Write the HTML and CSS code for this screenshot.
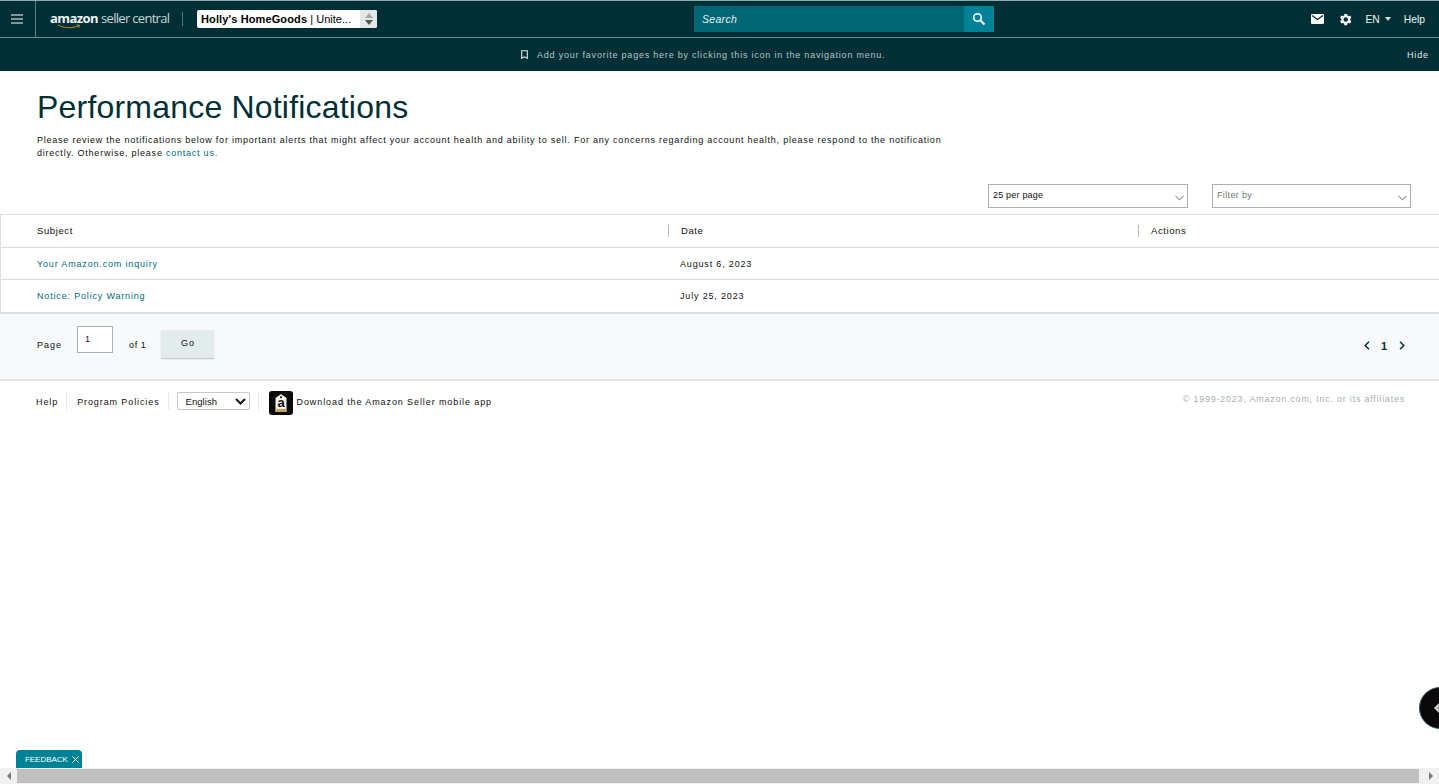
FILE: index.html
```html
<!DOCTYPE html>
<html lang="en">
<head>
<meta charset="utf-8">
<title>Performance Notifications</title>
<link rel="stylesheet" href="styles.css">
</head>
<body>
<div class="viewport">
  <div class="page">
    <header class="topbar">
      <div class="menu-cell">
        <svg class="ic-menu" width="12" height="10" viewBox="0 0 12 10"><path d="M0 1h12M0 5h12M0 9h12" stroke="#fff" stroke-width="1.2"/></svg>
      </div>
      <div class="logo">
        <span class="logo-amazon">amazon<svg class="smile" width="32" height="6" viewBox="0 0 32 6"><path d="M1 1c8 4.500 19 4.500 27 1M25 1l4 .5-1.500 3" fill="none" stroke="#c98f2c" stroke-width="1.200"/></svg></span>
        <span class="logo-rest">seller central</span>
      </div>
      <span class="logo-sep"></span>
      <div class="account">
        <span class="account-text"><b>Holly's HomeGoods</b> | Unite...</span>
        <span class="spinner"><i class="up"></i><i class="down"></i></span>
      </div>
      <div class="search">
        <span class="search-input">Search</span>
        <span class="search-btn"><svg width="14" height="14" viewBox="0 0 14 14"><circle cx="5.500" cy="5.500" r="3.800" fill="none" stroke="#fff" stroke-width="1.600"/><path d="M8.500 8.500l4 4" stroke="#fff" stroke-width="2"/></svg></span>
      </div>
      <div class="top-right">
        <svg class="ic-mail" width="13" height="10" viewBox="0 0 13 10"><rect width="13" height="10" rx="1" fill="#fff"/><path d="M1 1.500l5.500 4 5.500-4" fill="none" stroke="#002f36" stroke-width="1.300"/></svg>
        <svg class="ic-gear" width="15" height="15" viewBox="0 0 24 24"><path fill="#fff" d="M19.400 13a7.600 7.600 0 0 0 0-2l2.200-1.700-2.200-3.700-2.500 1a7.600 7.600 0 0 0-1.800-1L14.500 3h-4.300l-.4 2.600a7.600 7.600 0 0 0-1.800 1l-2.500-1-2.200 3.700L5.500 11a7.600 7.600 0 0 0 0 2l-2.200 1.700 2.200 3.700 2.500-1a7.600 7.600 0 0 0 1.800 1l.4 2.600h4.300l.4-2.600a7.600 7.600 0 0 0 1.800-1l2.500 1 2.200-3.700zM12.400 15.500a3.500 3.500 0 1 1 0-7 3.500 3.500 0 0 1 0 7z"/></svg>
        <span class="lang">EN<i class="caret"></i></span>
        <span class="help">Help</span>
      </div>
    </header>
    <div class="favbar">
      <div class="fav-msg">
        <svg width="7" height="9" viewBox="0 0 7 9"><path d="M.7.700h5.600v7.600L3.500 6.800.7 8.300z" fill="none" stroke="#dfe8e8" stroke-width="1.100"/></svg>
        <span>Add your favorite pages here by clicking this icon in the navigation menu.</span>
      </div>
      <span class="hide">Hide</span>
    </div>

    <main class="content">
      <h1 class="title">Performance Notifications</h1>
      <p class="intro">Please review the notifications below for important alerts that might affect your account health and ability to sell. For any concerns regarding account health, please respond to the notification directly. Otherwise, please <a class="link" href="#">contact us</a>.</p>
      <div class="filters">
        <div class="select"><span>25 per page</span><svg width="9" height="6" viewBox="0 0 9 6"><path d="M.5.800l4 4 4-4" fill="none" stroke="#8c9696" stroke-width="1.100"/></svg></div>
        <div class="select muted"><span>Filter by</span><svg width="9" height="6" viewBox="0 0 9 6"><path d="M.5.800l4 4 4-4" fill="none" stroke="#8c9696" stroke-width="1.100"/></svg></div>
      </div>
    </main>

    <div class="table">
      <div class="row head">
        <div class="c c1">Subject</div>
        <div class="c c2"><span class="th">Date</span></div>
        <div class="c c3"><span class="th">Actions</span></div>
      </div>
      <div class="row">
        <div class="c c1"><a class="link" href="#">Your Amazon.com inquiry</a></div>
        <div class="c c2">August 6, 2023</div>
        <div class="c c3"></div>
      </div>
      <div class="row last">
        <div class="c c1"><a class="link" href="#">Notice: Policy Warning</a></div>
        <div class="c c2">July 25, 2023</div>
        <div class="c c3"></div>
      </div>
    </div>

    <div class="pager">
      <span class="pg-label">Page</span>
      <span class="pg-input">1</span>
      <span class="pg-of">of 1</span>
      <span class="pg-go">Go</span>
      <div class="pg-nav">
        <svg width="6" height="9" viewBox="0 0 6 9"><path d="M5 .700L1.200 4.500 5 8.300" fill="none" stroke="#002f36" stroke-width="1.500"/></svg>
        <b>1</b>
        <svg width="6" height="9" viewBox="0 0 6 9"><path d="M1 .700l3.800 3.800L1 8.300" fill="none" stroke="#002f36" stroke-width="1.500"/></svg>
      </div>
    </div>

    <footer class="footer">
      <a class="f-link">Help</a>
      <span class="f-sep"></span>
      <a class="f-link">Program Policies</a>
      <span class="f-sep"></span>
      <div class="f-lang"><span>English</span><svg width="11" height="7" viewBox="0 0 11 7"><path d="M1 1l4.500 4.500L10 1" fill="none" stroke="#111" stroke-width="2"/></svg></div>
      <span class="f-sep"></span>
      <span class="app-icon">
        <svg width="24" height="24" viewBox="0 0 24 24"><rect width="24" height="24" rx="3" fill="#0b0b0b"/><path d="M6.500 7l5.500-4 5.500 4v14h-11z" fill="#f4f2ea"/><path d="M6.500 18h11v3h-11z" fill="#c9a35a"/><circle cx="12" cy="6.300" r="1" fill="#0b0b0b"/><text x="12" y="16" class="app-a">a</text></svg>
      </span>
      <span class="f-app">Download the Amazon Seller mobile app</span>
      <span class="copyright">© 1999-2023, Amazon.com, Inc. or its affiliates</span>
    </footer>
  </div>

  <div class="hscroll">
    <span class="arrow left"></span>
    <span class="thumb"></span>
    <span class="arrow right"></span>
  </div>

  <div class="feedback">FEEDBACK<svg width="7" height="7" viewBox="0 0 7 7"><path d="M.5.500l6 6M6.500.500l-6 6" stroke="#fff" stroke-width="1"/></svg></div>
  <div class="float-btn"><svg width="12" height="18" viewBox="0 0 12 18"><path d="M10 2L3 9l7 7" fill="none" stroke="#c9c9c9" stroke-width="3"/></svg></div>
</div>
</body>
</html>
```

FILE: styles.css
```css
* { box-sizing: border-box; }
html, body { margin: 0; padding: 0; height: 100%; overflow: hidden; background: #fff; }
body { font-family: "Liberation Sans", Arial, sans-serif; font-size: 10px; color: #002f36; }
.viewport { position: relative; width: 1439px; height: 784px; display: flex; flex-direction: column; overflow: hidden; }
.page { flex: 1; min-height: 0; }
a { text-decoration: none; }
.link { color: #00697a; }

.topbar { height: 38px; background: #002f36; border-top: 1px solid #8fa9b0; border-bottom: 1px solid #6f8a8e; display: flex; align-items: center; color: #fff; position: relative; }
.menu-cell { width: 36px; height: 36px; border-right: 1px solid #5f7f83; padding-right: 1px; display: flex; align-items: center; justify-content: center; }
.logo { margin-left: 14px; width: 119px; display: flex; align-items: baseline; gap: 3px; white-space: nowrap; margin-top: -2px; }
.logo-amazon { font-family: "Open Sans", sans-serif; font-weight: 700; font-size: 13px; letter-spacing: -.55px; position: relative; color: #f2f5f5; }
.smile { position: absolute; left: 7px; top: 15px; width: 25px; height: 5px; }
.logo-rest { font-family: "Open Sans", sans-serif; font-size: 13px; color: #c9d4d5; letter-spacing: -.7px; }
.logo-sep { width: 1px; height: 14px; background: #55757a; margin-left: 13px; }
.account { margin-left: 14px; width: 180px; height: 18px; background: #fff; border-radius: 2px; color: #000; display: flex; align-items: center; padding-left: 4px; font-size: 11px; white-space: nowrap; justify-content: space-between; }
.account b { letter-spacing: .12px; }
.account-text { letter-spacing: .03px; }
.spinner { width: 17px; height: 18px; background: #e6e8e8; border-radius: 0 2px 2px 0; display: flex; flex-direction: column; align-items: center; justify-content: center; gap: 2px; }
.spinner i { width: 0; height: 0; border-left: 4px solid transparent; border-right: 4px solid transparent; }
.spinner .up { border-bottom: 5px solid #a5a9a9; }
.spinner .down { border-top: 5px solid #555; }
.search { margin-left: 317px; width: 300px; height: 26px; display: flex; }
.search-input { flex: 1; background: #006574; color: #e6f2f3; font-style: italic; font-size: 10.500px; letter-spacing: .3px; padding-left: 8px; line-height: 26px; }
.search-btn { width: 30px; background: #008296; display: flex; align-items: center; justify-content: center; }
.top-right { margin-left: auto; display: flex; align-items: center; font-size: 10.300px; color: #f2f5f5; padding-right: 14px; }
.ic-gear { margin-left: 14px; }
.lang { margin-left: 13px; display: flex; align-items: center; }
.caret { width: 0; height: 0; border-left: 3.500px solid transparent; border-right: 3.500px solid transparent; border-top: 4px solid #d5dcdd; margin-left: 5px; }
.help { margin-left: 13px; }

.favbar { height: 33px; background: #002f36; display: flex; align-items: center; position: relative; color: #b7c4c6; font-size: 9px; letter-spacing: .78px; }
.fav-msg { margin-left: 521px; display: flex; align-items: center; gap: 9px; }
.hide { margin-left: auto; margin-right: 10px; color: #e6ecec; letter-spacing: .9px; }

.content { padding: 0 0 0 37px; }
.title { margin: 17px 0 0; font-size: 32px; line-height: 38px; font-weight: 400; color: #002f36; letter-spacing: .2px; }
.intro { margin: 8px 0 0; width: 915px; font-size: 9px; line-height: 13px; color: #0f1111; letter-spacing: .77px; }
.filters { display: flex; justify-content: flex-end; gap: 24px; margin-top: 24px; padding-right: 28px; }
.select { width: 200px; height: 24px; border: 1px solid #aab0b0; display: flex; justify-content: space-between; padding: 5px 3px 0 4px; font-size: 9px; letter-spacing: .2px; color: #0f1111; }
.select svg { margin-top: 5px; }
.select.muted { width: 199px; color: #6f7878; letter-spacing: .35px; }

.table { margin-top: 6px; border: 1px solid #dcdfdf; border-right: 0; border-bottom: 2px solid #dcdfdf; }
.row { height: 32px; display: flex; align-items: center; border-bottom: 1px solid #d9dcdc; font-size: 9px; letter-spacing: .83px; color: #0f1111; }
.row.head { height: 33px; font-size: 9.500px; letter-spacing: .6px; padding-bottom: 1px; }
.row.last { border-bottom: 0; height: 32px; }
.c { height: 100%; display: flex; align-items: center; }
.c1 { width: 667px; padding-left: 36px; }
.c2 { width: 470px; padding-left: 12px; }
.c3 { flex: 1; padding-left: 12px; }
.head .c2, .head .c3 { padding-left: 0; }
.th { border-left: 1px solid #b5baba; height: 12px; line-height: 12px; padding-left: 12px; }

.pager { height: 67px; background: #f7f9fa; border-bottom: 2px solid #e0e3e3; display: flex; align-items: flex-start; padding-left: 37px; font-size: 9px; letter-spacing: 1px; color: #0f1111; }
.pg-label { margin-top: 26px; }
.pg-input { margin-left: 15px; margin-top: 12px; width: 36px; height: 27px; border: 1px solid #aab0b0; background: #fff; padding: 7px 0 0 7px; }
.pg-of { margin-left: 16px; margin-top: 26px; letter-spacing: .6px; }
.pg-go { margin-left: 15px; margin-top: 16px; width: 53px; height: 28px; background: #e3ecec; box-shadow: 0 1px 1px #c4cbcb; text-align: center; line-height: 26px; }
.pg-nav { margin-left: auto; margin-right: 34px; margin-top: 26px; display: flex; align-items: center; gap: 11px; font-size: 11px; color: #002f36; height: 11px; }

.footer { height: 44px; display: flex; align-items: flex-start; padding-left: 36px; font-size: 9px; letter-spacing: .9px; color: #0f1111; position: relative; }
.f-link { margin-top: 16px; color: #0f1111; }
.f-sep { width: 1px; height: 18px; background: #e8eaea; margin: 11px 10px 0 8px; }
.f-lang { width: 73px; height: 18px; margin: 11px 0 0 -2px; border: 1px solid #c4c8c8; border-radius: 2px; background: #fff; display: flex; align-items: center; justify-content: space-between; padding: 0 3px 0 8px; letter-spacing: .05px; font-size: 9.500px; }
.app-icon { margin-top: 10px; height: 24px; }
.app-a { font-family: "Liberation Sans", Arial, sans-serif; font-size: 13px; font-weight: 700; text-anchor: middle; fill: #0b0b0b; letter-spacing: 0; }
.f-app { margin-top: 16px; margin-left: 4px; }
.copyright { position: absolute; right: 34px; top: 13px; color: #a9aeae; letter-spacing: .77px; }

.hscroll { height: 16px; display: flex; align-items: center; background: #f0f0f0; }
.arrow { width: 17px; display: flex; justify-content: center; }
.arrow.left::before { content: ""; border-top: 4px solid transparent; border-bottom: 4px solid transparent; border-right: 4px solid #777; }
.arrow.right::before { content: ""; border-top: 4px solid transparent; border-bottom: 4px solid transparent; border-left: 4px solid #777; }
.thumb { flex: 1; height: 14px; background: #c0c0c0; margin-right: 3px; }

.feedback { position: absolute; left: 16px; top: 750px; width: 66px; height: 18px; background: #008296; border-radius: 4px 4px 0 0; color: #fff; font-size: 8px; letter-spacing: -.05px; display: flex; align-items: center; padding-left: 9px; gap: 4px; }
.float-btn { position: absolute; left: 1419px; top: 687px; width: 42px; height: 42px; border-radius: 50%; background: #0a0a0a; border: 1px solid #38505a; display: flex; align-items: center; padding-left: 13px; }
```
